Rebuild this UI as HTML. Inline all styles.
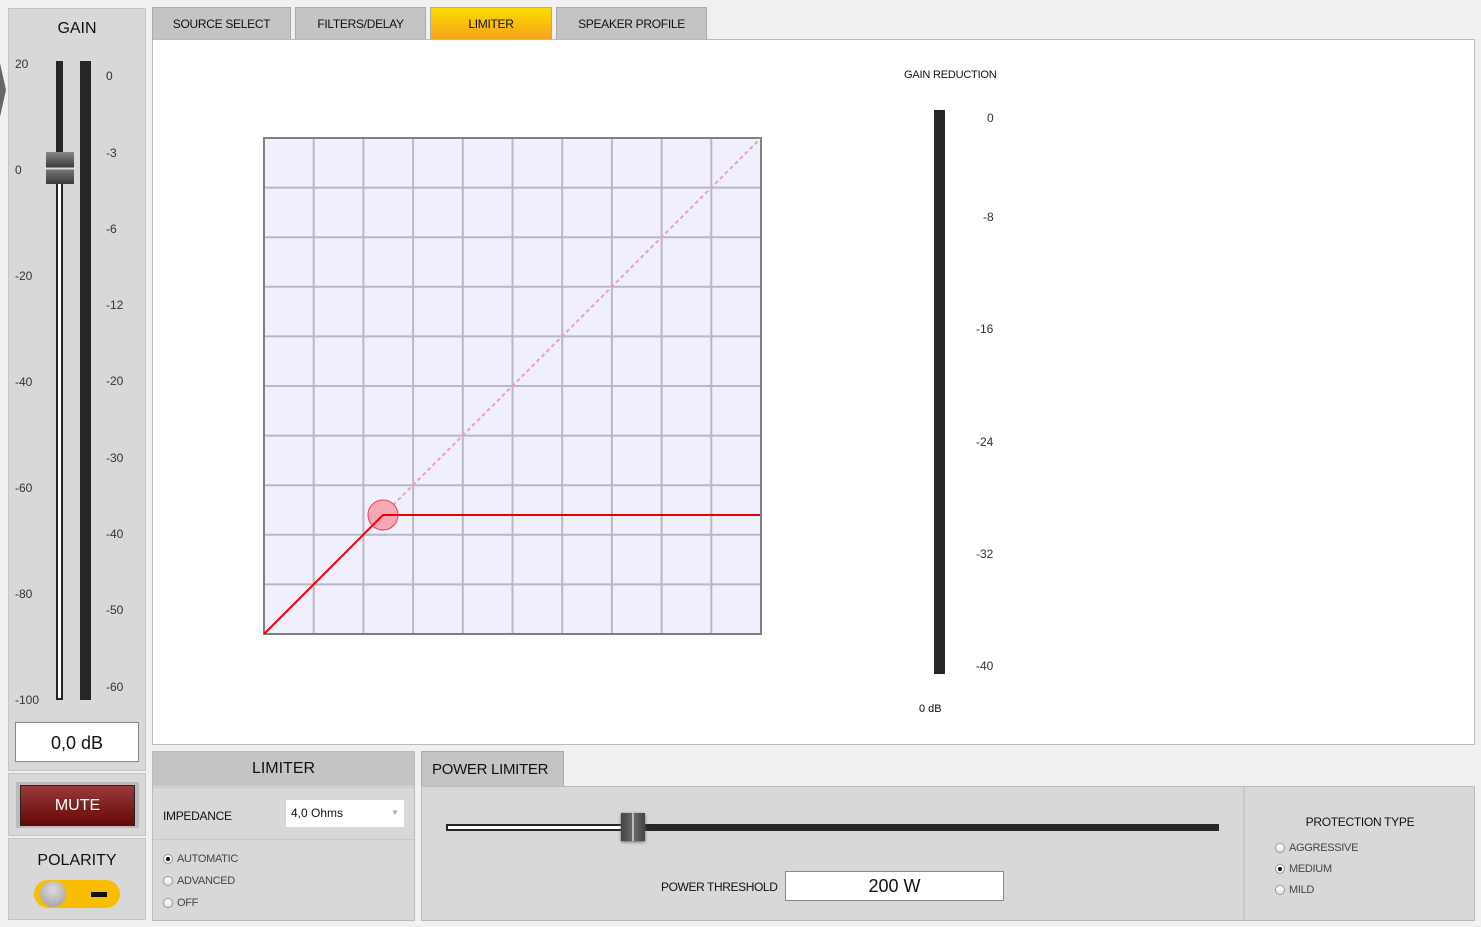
<!DOCTYPE html>
<html><head><meta charset="utf-8"><style>
*{box-sizing:border-box;margin:0;padding:0}
body{width:1481px;height:927px;background:#f0f0f0;font-family:"Liberation Sans","DejaVu Sans",sans-serif;position:relative;overflow:hidden;color:#111}
.a{position:absolute}
.t{font-size:12px;color:#333}
.tab{position:absolute;top:7px;height:32px;background:#c4c4c4;border:1px solid #aaa;border-bottom:none;font-size:12px;letter-spacing:-0.3px;text-align:center;line-height:32px;color:#111}
.rad{position:absolute;width:10px;height:10px;border-radius:50%;border:1px solid #999;background:linear-gradient(#fff,#e4e4e4)}
.rad.on::after{content:"";position:absolute;left:2px;top:2px;width:4px;height:4px;border-radius:50%;background:#111}
.rl{position:absolute;font-size:11px;color:#444;letter-spacing:-0.3px}
</style></head><body>
<div class="a" style="left:-20px;top:55px;width:26px;height:70px;background:#666;clip-path:polygon(0 0,70% 0,100% 50%,70% 100%,0 100%)"></div>
<div class="a" style="left:8px;top:8px;width:138px;height:763px;background:#d8d8d8;border:1px solid #c4c4c4"></div>
<div class="a" style="left:8px;top:20px;width:138px;text-align:center;font-size:16px">GAIN</div>
<div class="a" style="left:56px;top:61px;width:7px;height:639px;background:#262626"></div>
<div class="a" style="left:58px;top:184px;width:3px;height:514px;background:#fff"></div>
<div class="a" style="left:80px;top:61px;width:11px;height:639px;background:#262626"></div>
<div class="a" style="left:46px;top:152px;width:28px;height:32px;background:linear-gradient(#888,#3a3a3a 48%,#ddd 48%,#ddd 54%,#777 54%,#3a3a3a)"></div>
<div class="a t" style="left:15px;top:57px">20</div>
<div class="a t" style="left:15px;top:163px">0</div>
<div class="a t" style="left:15px;top:269px">-20</div>
<div class="a t" style="left:15px;top:375px">-40</div>
<div class="a t" style="left:15px;top:481px">-60</div>
<div class="a t" style="left:15px;top:587px">-80</div>
<div class="a t" style="left:15px;top:693px">-100</div>
<div class="a t" style="left:106px;top:69px">0</div>
<div class="a t" style="left:106px;top:146px">-3</div>
<div class="a t" style="left:106px;top:222px">-6</div>
<div class="a t" style="left:106px;top:298px">-12</div>
<div class="a t" style="left:106px;top:374px">-20</div>
<div class="a t" style="left:106px;top:451px">-30</div>
<div class="a t" style="left:106px;top:527px">-40</div>
<div class="a t" style="left:106px;top:603px">-50</div>
<div class="a t" style="left:106px;top:680px">-60</div>
<div class="a" style="left:15px;top:722px;width:124px;height:40px;background:#fff;border:1px solid #888;text-align:center;line-height:40px;font-size:18px">0,0 dB</div>
<div class="a" style="left:8px;top:773px;width:138px;height:63px;background:#d8d8d8;border:1px solid #c4c4c4"></div>
<div class="a" style="left:16px;top:782px;width:123px;height:46px;background:#bbb"></div>
<div class="a" style="left:20px;top:785px;width:115px;height:41px;background:linear-gradient(#9a3a3a,#650808);border:1px solid #222;color:#fff;text-align:center;line-height:40px;font-size:16px">MUTE</div>
<div class="a" style="left:8px;top:838px;width:138px;height:82px;background:#d8d8d8;border:1px solid #c4c4c4"></div>
<div class="a" style="left:8px;top:852px;width:138px;text-align:center;font-size:16px">POLARITY</div>
<div class="a" style="left:34px;top:880px;width:86px;height:28px;border-radius:14px;background:#f9be00"></div>
<div class="a" style="left:40px;top:881px;width:26px;height:26px;border-radius:50%;background:radial-gradient(circle at 50% 35%,#ddd,#999)"></div>
<div class="a" style="left:91px;top:892px;width:16px;height:5px;background:#111"></div>
<div class="tab" style="left:152px;width:139px">SOURCE SELECT</div>
<div class="tab" style="left:295px;width:131px">FILTERS/DELAY</div>
<div class="tab" style="left:430px;width:122px;background:linear-gradient(#fbdc00,#f8a21c)">LIMITER</div>
<div class="tab" style="left:556px;width:151px">SPEAKER PROFILE</div>
<div class="a" style="left:152px;top:39px;width:1323px;height:706px;background:#fff;border:1px solid #bbb"></div>
<svg class="a" style="left:263px;top:137px" width="500" height="499">
<rect x="1" y="1" width="497" height="496" fill="#efeffd" stroke="#808080" stroke-width="2"/>
<g stroke="#b8b8c4" stroke-width="2">
<line x1="50.7" y1="1" x2="50.7" y2="497"/><line x1="100.4" y1="1" x2="100.4" y2="497"/><line x1="150.1" y1="1" x2="150.1" y2="497"/><line x1="199.8" y1="1" x2="199.8" y2="497"/><line x1="249.5" y1="1" x2="249.5" y2="497"/><line x1="299.2" y1="1" x2="299.2" y2="497"/><line x1="348.9" y1="1" x2="348.9" y2="497"/><line x1="398.6" y1="1" x2="398.6" y2="497"/><line x1="448.3" y1="1" x2="448.3" y2="497"/>
<line y1="50.6" x1="1" y2="50.6" x2="497"/><line y1="100.2" x1="1" y2="100.2" x2="497"/><line y1="149.8" x1="1" y2="149.8" x2="497"/><line y1="199.4" x1="1" y2="199.4" x2="497"/><line y1="249" x1="1" y2="249" x2="497"/><line y1="298.6" x1="1" y2="298.6" x2="497"/><line y1="348.2" x1="1" y2="348.2" x2="497"/><line y1="397.8" x1="1" y2="397.8" x2="497"/><line y1="447.4" x1="1" y2="447.4" x2="497"/>
</g>
<rect x="1" y="1" width="497" height="496" fill="none" stroke="#808080" stroke-width="2"/>
<line x1="120" y1="378" x2="497" y2="2" stroke="#f0a0b0" stroke-width="2" stroke-dasharray="4,3"/>
<circle cx="120" cy="378" r="15" fill="#f5a8b8" stroke="#e84050" stroke-width="1"/>
<polyline points="1,497 120,378 497,378" fill="none" stroke="#e00" stroke-width="2"/>
</svg>
<div class="a" style="left:904px;top:69px;font-size:11px;letter-spacing:-0.2px">GAIN REDUCTION</div>
<div class="a" style="left:934px;top:110px;width:11px;height:564px;background:#262626"></div>
<div class="a t" style="left:987px;top:111px">0</div>
<div class="a t" style="left:983px;top:210px">-8</div>
<div class="a t" style="left:976px;top:322px">-16</div>
<div class="a t" style="left:976px;top:435px">-24</div>
<div class="a t" style="left:976px;top:547px">-32</div>
<div class="a t" style="left:976px;top:659px">-40</div>
<div class="a" style="left:919px;top:703px;font-size:11px">0 dB</div>
<div class="a" style="left:152px;top:751px;width:263px;height:170px;background:#d8d8d8;border:1px solid #bbb"></div>
<div class="a" style="left:153px;top:752px;width:261px;height:34px;background:#c4c4c4;text-align:center;line-height:34px;font-size:16px">LIMITER</div>
<div class="a" style="left:153px;top:787px;width:261px;height:53px;border:1px solid #c8c8c8;border-width:1px 0"></div>
<div class="a" style="left:163px;top:809px;font-size:12px;letter-spacing:-0.3px">IMPEDANCE</div>
<div class="a" style="left:286px;top:800px;width:118px;height:27px;background:#fff;font-size:12px;line-height:26px;padding-left:5px">4,0 Ohms<span style="position:absolute;right:5px;top:0;color:#aaa;font-size:8px">▼</span></div>
<div class="rad on" style="left:163px;top:854px"></div><div class="rl" style="left:177px;top:853px">AUTOMATIC</div>
<div class="rad" style="left:163px;top:876px"></div><div class="rl" style="left:177px;top:875px">ADVANCED</div>
<div class="rad" style="left:163px;top:898px"></div><div class="rl" style="left:177px;top:897px">OFF</div>
<div class="a" style="left:421px;top:751px;width:143px;height:36px;background:#c4c4c4;border:1px solid #aaa;border-bottom:none;font-size:15px;letter-spacing:-0.3px;line-height:36px;padding-left:10px">POWER LIMITER</div>
<div class="a" style="left:421px;top:786px;width:1054px;height:135px;background:#d8d8d8;border:1px solid #bbb"></div>
<div class="a" style="left:1243px;top:787px;width:2px;height:133px;background:#c8c8c8"></div>
<div class="a" style="left:446px;top:824px;width:773px;height:7px;background:#262626"></div>
<div class="a" style="left:448px;top:826px;width:176px;height:3px;background:#fff"></div>
<div class="a" style="left:621px;top:813px;width:24px;height:28px;background:linear-gradient(90deg,#444,#666 45%,#bbb 45%,#bbb 55%,#666 55%,#444);box-shadow:0 1px 3px #666"></div>
<div class="a" style="left:661px;top:880px;font-size:12px;letter-spacing:-0.4px">POWER THRESHOLD</div>
<div class="a" style="left:785px;top:871px;width:219px;height:30px;background:#fff;border:1px solid #888;text-align:center;line-height:28px;font-size:18px">200 W</div>
<div class="a" style="left:1245px;top:815px;width:230px;text-align:center;font-size:12px;letter-spacing:-0.3px">PROTECTION TYPE</div>
<div class="rad" style="left:1275px;top:843px"></div><div class="rl" style="left:1289px;top:842px">AGGRESSIVE</div>
<div class="rad on" style="left:1275px;top:864px"></div><div class="rl" style="left:1289px;top:863px">MEDIUM</div>
<div class="rad" style="left:1275px;top:885px"></div><div class="rl" style="left:1289px;top:884px">MILD</div>
</body></html>
